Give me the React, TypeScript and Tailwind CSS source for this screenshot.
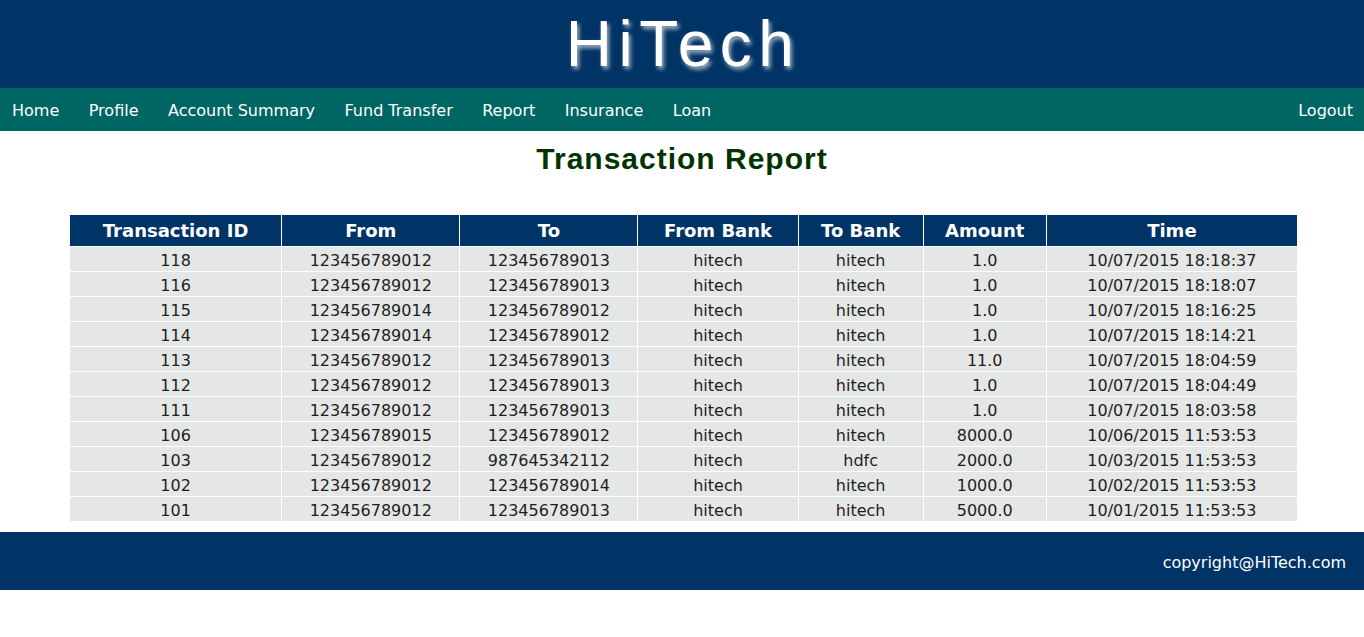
const navLinks = ['Home', 'Profile', 'Account Summary', 'Fund Transfer', 'Report', 'Insurance', 'Loan'];

const columns = [
  { label: 'Transaction ID', width: 'w-[212px]' },
  { label: 'From', width: 'w-[178px]' },
  { label: 'To', width: 'w-[178px]' },
  { label: 'From Bank', width: 'w-[160px]' },
  { label: 'To Bank', width: 'w-[125px]' },
  { label: 'Amount', width: 'w-[123px]' },
  { label: 'Time', width: 'w-[251px]' },
];

const rows = [
  ['118', '123456789012', '123456789013', 'hitech', 'hitech', '1.0', '10/07/2015 18:18:37'],
  ['116', '123456789012', '123456789013', 'hitech', 'hitech', '1.0', '10/07/2015 18:18:07'],
  ['115', '123456789014', '123456789012', 'hitech', 'hitech', '1.0', '10/07/2015 18:16:25'],
  ['114', '123456789014', '123456789012', 'hitech', 'hitech', '1.0', '10/07/2015 18:14:21'],
  ['113', '123456789012', '123456789013', 'hitech', 'hitech', '11.0', '10/07/2015 18:04:59'],
  ['112', '123456789012', '123456789013', 'hitech', 'hitech', '1.0', '10/07/2015 18:04:49'],
  ['111', '123456789012', '123456789013', 'hitech', 'hitech', '1.0', '10/07/2015 18:03:58'],
  ['106', '123456789015', '123456789012', 'hitech', 'hitech', '8000.0', '10/06/2015 11:53:53'],
  ['103', '123456789012', '987645342112', 'hitech', 'hdfc', '2000.0', '10/03/2015 11:53:53'],
  ['102', '123456789012', '123456789014', 'hitech', 'hitech', '1000.0', '10/02/2015 11:53:53'],
  ['101', '123456789012', '123456789013', 'hitech', 'hitech', '5000.0', '10/01/2015 11:53:53'],
];

export default function App() {
  return (
    <div className="min-h-[637px] bg-white font-['Tahoma','DejaVu_Sans',sans-serif]">
      {/* header */}
      <header className="h-[88px] bg-[#003366] flex justify-center">
        <h1 className="font-['Liberation_Sans',Arial,sans-serif] text-[64px] leading-[88px] tracking-[6.5px] pl-[2px] text-white [text-shadow:2px_3px_4px_#a9b6c4]">
          HiTech
        </h1>
      </header>

      {/* nav */}
      <nav className="h-[43px] bg-[#006663] flex items-center justify-between pt-[2px] pl-[12px] pr-[11px] text-white text-[16px]">
        <ul className="flex items-center gap-[29.5px]">
          {navLinks.map((link) => (
            <li key={link}>
              <a href="#">{link}</a>
            </li>
          ))}
        </ul>
        <a href="#">Logout</a>
      </nav>

      {/* content */}
      <main className="pt-[10px] pb-[10px]">
        <h2 className="text-center font-['Liberation_Sans',Arial,sans-serif] font-bold text-[30px] leading-[36px] tracking-[1px] text-[#003300]">
          Transaction Report
        </h2>

        <table className="mt-[37px] ml-[69px] w-[1229px] border-collapse text-center text-[16px] text-[#1e1e1e]">
          <thead>
            <tr className="bg-[#003366] text-white">
              {columns.map((col) => (
                <th key={col.label} className={`${col.width} h-[32px] border border-white font-bold text-[18px]`}>
                  {col.label}
                </th>
              ))}
            </tr>
          </thead>
          <tbody>
            {rows.map((row) => (
              <tr key={row[0]} className="bg-[#e5e6e6]">
                {row.map((cell, i) => (
                  <td key={i} className="h-[25px] p-0 pt-[3px] border border-white leading-[21px]">
                    {cell}
                  </td>
                ))}
              </tr>
            ))}
          </tbody>
        </table>
      </main>

      {/* footer */}
      <footer className="h-[58px] bg-[#003366] flex items-center justify-end pt-[3px] pr-[18px] text-white text-[16px]">
        copyright@HiTech.com
      </footer>
    </div>
  );
}
